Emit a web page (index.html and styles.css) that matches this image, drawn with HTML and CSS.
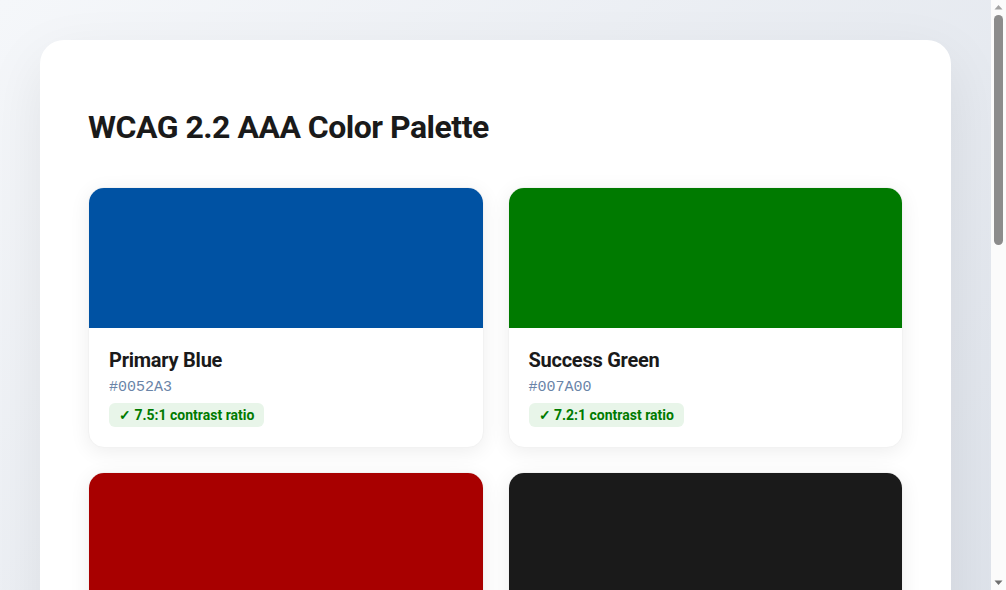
FILE: index.html
```html
<!DOCTYPE html>
<html lang="en">
<head>
<meta charset="utf-8">
<title>WCAG 2.2 AAA Color Palette</title>
<link rel="stylesheet" href="styles.css">
</head>
<body>
<main class="container">
  <h1 class="title">WCAG 2.2 AAA Color Palette</h1>
  <div class="grid">
    <div class="card">
      <div class="swatch swatch-blue"></div>
      <div class="info">
        <h2 class="name">Primary Blue</h2>
        <div class="hex">#0052A3</div>
        <span class="badge">✓ 7.5:1 contrast ratio</span>
      </div>
    </div>
    <div class="card">
      <div class="swatch swatch-green"></div>
      <div class="info">
        <h2 class="name">Success Green</h2>
        <div class="hex">#007A00</div>
        <span class="badge">✓ 7.2:1 contrast ratio</span>
      </div>
    </div>
    <div class="card">
      <div class="swatch swatch-red"></div>
      <div class="info">
        <h2 class="name">Error Red</h2>
        <div class="hex">#A80000</div>
        <span class="badge">✓ 8.1:1 contrast ratio</span>
      </div>
    </div>
    <div class="card">
      <div class="swatch swatch-dark"></div>
      <div class="info">
        <h2 class="name">Text Dark</h2>
        <div class="hex">#1A1A1A</div>
        <span class="badge">✓ 17.4:1 contrast ratio</span>
      </div>
    </div>
    <div class="card">
      <div class="swatch swatch-purple"></div>
      <div class="info">
        <h2 class="name">Accent Purple</h2>
        <div class="hex">#5B2A86</div>
        <span class="badge">✓ 10.2:1 contrast ratio</span>
      </div>
    </div>
    <div class="card">
      <div class="swatch swatch-orange"></div>
      <div class="info">
        <h2 class="name">Warning Orange</h2>
        <div class="hex">#8A4B00</div>
        <span class="badge">✓ 7.1:1 contrast ratio</span>
      </div>
    </div>
    <div class="card">
      <div class="swatch swatch-teal"></div>
      <div class="info">
        <h2 class="name">Info Teal</h2>
        <div class="hex">#005E66</div>
        <span class="badge">✓ 7.6:1 contrast ratio</span>
      </div>
    </div>
    <div class="card">
      <div class="swatch swatch-gray"></div>
      <div class="info">
        <h2 class="name">Neutral Gray</h2>
        <div class="hex">#4A4A4A</div>
        <span class="badge">✓ 8.9:1 contrast ratio</span>
      </div>
    </div>
  </div>
</main>
<div class="scrollbar" aria-hidden="true">
  <svg class="arrow" width="15" height="15" viewBox="0 0 15 15"><path d="M3.5 9.5 L7.5 5 L11.5 9.5 Z" fill="#a3a3a3"/></svg>
  <div class="track"><div class="thumb"></div></div>
  <svg class="arrow" width="15" height="15" viewBox="0 0 15 15"><path d="M3.5 5.5 L7.5 10 L11.5 5.5 Z" fill="#6f6f6f"/></svg>
</div>
</body>
</html>
```

FILE: styles.css
```css
* {
  box-sizing: border-box;
}

html {
  min-height: 100%;
}

body {
  margin: 0;
  padding: 40px 55px 40px 40px;
  font-family: Roboto, "Liberation Sans", sans-serif;
  color: #1a1a1a;
  background: linear-gradient(135deg, #f5f7fa 0%, #d3d9e3 100%);
  min-height: 100vh;
}

.container {
  background: #ffffff;
  border-radius: 24px;
  padding: 48px;
  box-shadow: 0 20px 60px rgba(0, 0, 0, 0.08);
}

.title {
  margin: 20px 0 41px;
  font-size: 32px;
  line-height: 1.2;
  font-weight: 700;
  letter-spacing: -0.5px;
  color: #1a1a1a;
}

.grid {
  display: grid;
  grid-template-columns: 1fr 1fr;
  gap: 24px;
}

.card {
  background: #ffffff;
  border: 1px solid #f2f2f2;
  border-radius: 16px;
  overflow: hidden;
  box-shadow: 0 4px 20px rgba(0, 0, 0, 0.07);
}

.swatch {
  height: 140px;
}

.swatch-blue { background: #0052a3; }
.swatch-green { background: #007a00; }
.swatch-red { background: #a80000; }
.swatch-dark { background: #1a1a1a; }
.swatch-purple { background: #5b2a86; }
.swatch-orange { background: #8a4b00; }
.swatch-teal { background: #005e66; }
.swatch-gray { background: #4a4a4a; }

.info {
  padding: 20px;
}

.name {
  margin: 0 0 6px;
  font-size: 20px;
  line-height: 24px;
  font-weight: 700;
  letter-spacing: -0.25px;
  color: #1a1a1a;
}

.hex {
  font-family: "Liberation Mono", monospace;
  font-size: 15px;
  line-height: 20px;
  color: #6a84a8;
  margin-bottom: 5px;
}

.badge {
  display: inline-block;
  background: #e8f5e9;
  color: #007a00;
  font-size: 14px;
  line-height: 16px;
  font-weight: 700;
  padding: 4px 10px;
  border-radius: 6px;
}

/* browser scrollbar chrome, drawn over the page edge */
.scrollbar {
  position: fixed;
  top: 0;
  right: 0;
  width: 15px;
  height: 100vh;
  background: #fbfbfb;
  display: flex;
  flex-direction: column;
}

.arrow {
  display: block;
  flex: none;
}

.track {
  flex: 1;
  padding: 0 3px;
}

.thumb {
  height: 230px;
  background: #8c8c8c;
  border-radius: 5px;
}
```
